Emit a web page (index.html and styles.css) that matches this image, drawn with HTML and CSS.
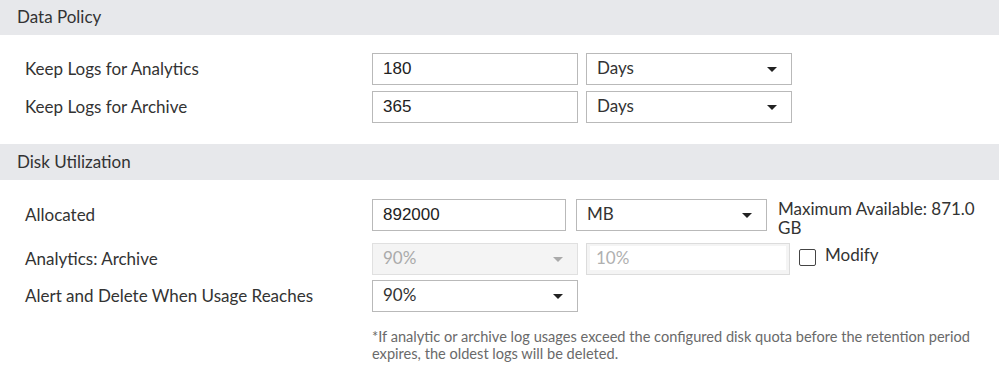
FILE: index.html
```html
<!DOCTYPE html>
<html lang="en">
<head>
<meta charset="utf-8">
<title>Log Settings</title>
<link rel="stylesheet" href="styles.css">
</head>
<body>
<section class="section">
  <div class="section-header">Data Policy</div>
  <div class="section-body body-policy">
    <div class="row">
      <div class="label">Keep Logs for Analytics</div>
      <div class="controls">
        <div class="field field-num w206">180</div>
        <div class="field select w206"><span>Days</span><span class="caret"></span></div>
      </div>
    </div>
    <div class="row">
      <div class="label">Keep Logs for Archive</div>
      <div class="controls">
        <div class="field field-num w206">365</div>
        <div class="field select w206"><span>Days</span><span class="caret"></span></div>
      </div>
    </div>
  </div>
</section>
<section class="section">
  <div class="section-header">Disk Utilization</div>
  <div class="section-body body-disk">
    <div class="row row-alloc">
      <div class="label">Allocated</div>
      <div class="controls">
        <div class="field field-num w194">892000</div>
        <div class="field select w191"><span>MB</span><span class="caret"></span></div>
        <div class="max-note">Maximum Available: 871.0 GB</div>
      </div>
    </div>
    <div class="row row-analytics">
      <div class="label">Analytics: Archive</div>
      <div class="controls">
        <div class="field select disabled w206"><span>90%</span><span class="caret"></span></div>
        <div class="field disabled-input w204"><span class="inner">10%</span></div>
        <div class="check"><span class="box"></span><span class="check-text">Modify</span></div>
      </div>
    </div>
    <div class="row row-alert">
      <div class="label">Alert and Delete When Usage Reaches</div>
      <div class="controls">
        <div class="field select w206"><span>90%</span><span class="caret"></span></div>
      </div>
    </div>
    <p class="footnote">*If analytic or archive log usages exceed the configured disk quota before the retention period expires, the oldest logs will be deleted.</p>
  </div>
</section>
</body>
</html>
```
FILE: styles.css
```css
* { box-sizing: border-box; }
html, body { margin: 0; padding: 0; background: #fff; }
body {
  font-family: Lato, "Open Sans", sans-serif;
  font-size: 17px;
  color: #333;
  width: 999px;
  height: 379px;
  overflow: hidden;
}
.section-header {
  height: 36px;
  margin-top: -1px;
  background: #e7e8eb;
  padding-left: 17px;
  line-height: 35px;
  font-size: 17px;
  color: #333;
}
.section + .section .section-header { margin-top: 0; }
.section-body { padding-left: 25px; }
.body-policy { padding-top: 18px; padding-bottom: 21px; }
.body-policy .row:last-child { margin-bottom: 0; }
.body-disk { padding-top: 19px; }
.row { display: flex; align-items: flex-start; margin-bottom: 6px; }
.row-analytics { margin-bottom: 5px; }
.label { width: 347px; line-height: 31px; flex: none; }
.controls { display: flex; align-items: flex-start; gap: 8px; }
.row-alloc .controls { gap: 10px; }
.field {
  height: 32px;
  border: 1px solid #b9b9b9;
  background: #fff;
  padding: 0 10px;
  display: flex;
  align-items: center;
  flex: none;
  line-height: 20px;
}
.field > span:first-child { margin-top: -2px; }
.field-num { font-family: "Liberation Sans", Arial, sans-serif; font-size: 17px; color: #222; }
.w206 { width: 206px; }
.w204 { width: 204px; }
.w194 { width: 194px; }
.w191 { width: 191px; }
.select { justify-content: space-between; padding-right: 14px; }
.caret {
  width: 0; height: 0;
  border-left: 5px solid transparent;
  border-right: 5px solid transparent;
  border-top: 5px solid #222;
}
.select.disabled { background: #f4f4f4; border-color: #e0e0e0; color: #aaa; }
.select.disabled .caret { border-top-color: #aaa; }
.disabled-input { border-color: #dcdcdc; background: #f4f4f4; padding: 3px; }
.disabled-input > .inner { display: block; background: #fff; height: 100%; width: 100%; padding-left: 6px; line-height: 24px; color: #b0b0b0; margin-top: 0; }
.max-note { width: 214px; line-height: 19px; margin-top: 0; margin-left: 1px; }
.check { display: flex; align-items: flex-start; margin-left: 1px; padding-top: 2px; }
.box { width: 17px; height: 17px; border: 1.5px solid #444; border-radius: 2px; margin-top: 4px; margin-right: 9px; }
.check-text { line-height: 20px; }
.footnote {
  margin: 16px 0 0 347px;
  font-size: 14.6px;
  line-height: 17px;
  color: #6a6a6a;
  width: 622px;
}
```
